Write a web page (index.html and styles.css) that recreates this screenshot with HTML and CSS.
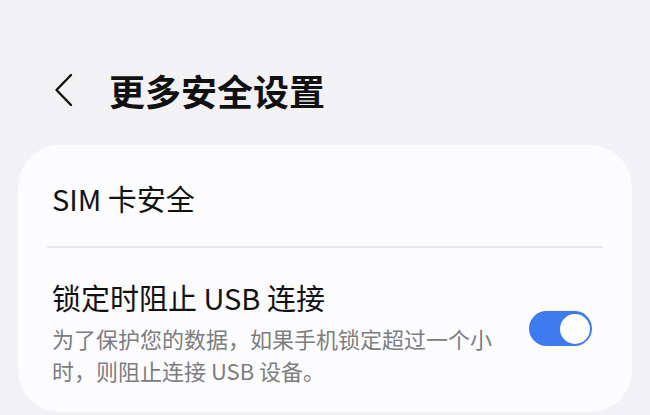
FILE: index.html
```html
<!DOCTYPE html>
<html lang="zh-CN">

<head>
    <meta charset="UTF-8">
    <meta name="viewport" content="width=device-width, initial-scale=1.0">
    <title>更多安全设置</title>
    <link rel="stylesheet" href="styles.css">
</head>

<body>
    <header class="top-bar">
        <button class="back-button" aria-label="返回">
            <svg width="20" height="34" viewBox="0 0 20 34">
                <polyline points="17,2 2.5,17 17,32" fill="none" stroke="#111" stroke-width="2.4" stroke-linecap="round" stroke-linejoin="round"/>
            </svg>
        </button>
        <h1 class="page-title">更多安全设置</h1>
    </header>

    <main class="card">
        <div class="item item-simple">SIM 卡安全</div>
        <div class="divider"></div>
        <div class="item item-switch">
            <div class="item-text">
                <div class="item-title">锁定时阻止 USB 连接</div>
                <div class="item-desc">为了保护您的数据，如果手机锁定超过一个小时，则阻止连接 USB 设备。</div>
            </div>
            <div class="switch on"><span class="knob"></span></div>
        </div>
    </main>
</body>

</html>
```

FILE: styles.css
```css
body {
    margin: 0;
    padding: 0;
    background-color: #f2f2f4;
    color: #111;
    font-family: "Noto Sans CJK SC", "Noto Sans", sans-serif;
    height: 415px;
    overflow: hidden;
}

/* Header */
.top-bar {
    display: flex;
    align-items: center;
    padding: 68px 0 33px 54px;
}

.back-button {
    display: flex;
    padding: 0;
    margin: 0 35px 0 0;
    border: none;
    background: none;
}

.page-title {
    margin: 0;
    font-size: 36px;
    line-height: 44px;
    font-weight: 700;
}

/* Card */
.card {
    margin: 0 18px;
    background-color: #fcfcfe;
    border-radius: 42px;
}

.item {
    padding: 0 40px 0 34px;
}

.item-simple {
    padding-top: 35px;
    padding-bottom: 30px;
    font-size: 29px;
    line-height: 36px;
}

.divider {
    height: 2px;
    margin: 0 29px;
    background-color: #e8e8ea;
}

.item-switch {
    display: flex;
    align-items: center;
    gap: 30px;
    padding-top: 31px;
    padding-bottom: 26px;
}

.item-text {
    flex: 1;
}

.item-title {
    font-size: 29px;
    line-height: 36px;
    margin-bottom: 7px;
}

.item-desc {
    font-size: 22px;
    line-height: 32px;
    color: #7d7d7f;
}

/* Toggle switch */
.switch {
    position: relative;
    width: 63px;
    height: 35px;
    flex-shrink: 0;
    margin-bottom: 8px;
    border-radius: 18px;
    background-color: #3e7bef;
}

.switch .knob {
    position: absolute;
    top: 2.5px;
    right: 2.5px;
    width: 30px;
    height: 30px;
    border-radius: 50%;
    background-color: #fff;
}
```
